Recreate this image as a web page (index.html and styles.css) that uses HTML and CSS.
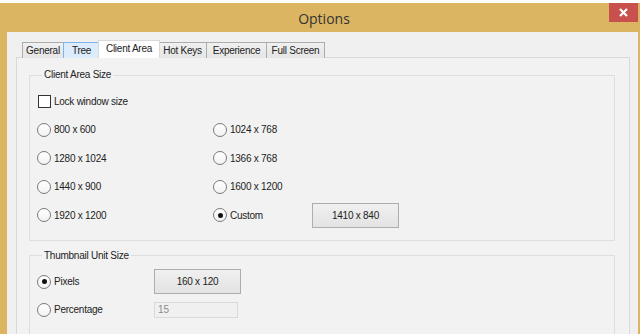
FILE: index.html
```html
<!DOCTYPE html>
<html lang="en">
<head>
  <meta charset="UTF-8" />
  <title>Options</title>
  <link rel="stylesheet" href="styles.css">
</head>
<body>
  <div class="window">
    <div class="titlebar">
      <span></span>
      <span class="title">Options</span>
      <div class="close-cell">
        <div class="close" title="Close">
          <svg width="9" height="9" viewBox="0 0 9 9"><path d="M1 1 L8 8 M8 1 L1 8" stroke="#ffffff" stroke-width="2.2"/></svg>
        </div>
      </div>
    </div>

    <div class="client">
      <div class="tabs">
        <span class="tab">General</span>
        <span class="tab hover">Tree</span>
        <span class="tab active">Client Area</span>
        <span class="tab">Hot Keys</span>
        <span class="tab">Experience</span>
        <span class="tab">Full Screen</span>
      </div>

      <div class="panel">
        <fieldset class="group">
          <legend>Client Area Size</legend>
          <div class="grid sizes">
            <label class="opt full"><input type="checkbox" /> Lock window size</label>

            <label class="opt"><input type="radio" name="size" /> 800 x 600</label>
            <label class="opt"><input type="radio" name="size" /> 1024 x 768</label>
            <span></span>

            <label class="opt"><input type="radio" name="size" /> 1280 x 1024</label>
            <label class="opt"><input type="radio" name="size" /> 1366 x 768</label>
            <span></span>

            <label class="opt"><input type="radio" name="size" /> 1440 x 900</label>
            <label class="opt"><input type="radio" name="size" /> 1600 x 1200</label>
            <span></span>

            <label class="opt"><input type="radio" name="size" /> 1920 x 1200</label>
            <label class="opt"><input type="radio" name="size" checked /> Custom</label>
            <button class="btn" type="button">1410 x 840</button>
          </div>
        </fieldset>

        <fieldset class="group">
          <legend>Thumbnail Unit Size</legend>
          <div class="grid thumbs">
            <label class="opt"><input type="radio" name="unit" checked /> Pixels</label>
            <button class="btn" type="button">160 x 120</button>

            <label class="opt"><input type="radio" name="unit" /> Percentage</label>
            <input class="field" type="text" value="15" disabled />
          </div>
        </fieldset>
      </div>
    </div>
  </div>
</body>
</html>
```

FILE: styles.css
```css
html, body {
  margin: 0;
  height: 100%;
  overflow: hidden;
  background: #fff;
}
body {
  font-family: "Liberation Sans", Arial, sans-serif;
  font-size: 10px;
  letter-spacing: -0.25px;
  color: #222;
}
.window {
  margin-top: 3px;
  padding: 0 2px 0 7px;
  background: #dcb562;
}
.titlebar {
  height: 29px;
  display: grid;
  grid-template-columns: 1fr auto 1fr;
}
.title {
  align-self: center;
  font-family: "Open Sans", sans-serif;
  font-size: 14px;
  letter-spacing: 0;
  color: #333;
  margin-left: 3px;
  margin-top: 1px;
}
.close-cell {
  display: flex;
  justify-content: flex-end;
  align-items: flex-start;
}
.close {
  width: 29px;
  height: 19px;
  background: rgb(201, 81, 77);
  display: flex;
  align-items: center;
  justify-content: center;
}
.client {
  background: #f0f0f0;
  padding: 8px 8px 0 9px;
  height: 400px;
}
.tabs {
  display: flex;
  align-items: flex-end;
  padding-left: 6px;
  height: 18px;
  position: relative;
  z-index: 1;
}
.tab {
  box-sizing: border-box;
  height: 16px;
  line-height: 15px;
  text-align: center;
  border: 1px solid #acacac;
  border-bottom: none;
  margin-right: -1px;
  background: linear-gradient(#f0f0f0, #e5e5e5);
  color: #222;
}
.tab:nth-child(1) { width: 42px; }
.tab:nth-child(2) { width: 37px; }
.tab:nth-child(3) { width: 62px; }
.tab:nth-child(4) { width: 49px; }
.tab:nth-child(5) { width: 61px; }
.tab:nth-child(6) { width: 59px; }
.tab.hover {
  background: #dcecfc;
  border-color: #7eb4ea;
  position: relative;
}
.tab.active {
  height: 18px;
  line-height: 16px;
  margin: 0 -2px 0 -1px;
  background: #fff;
  border-color: #d9d9d9;
  position: relative;
  z-index: 2;
}
.panel {
  border: 1px solid #d9d9d9;
  margin-top: -1px;
  background: #f2f2f2;
  padding: 10px 14px 0 12px;
  height: 400px;
}
.group {
  margin: 0 0 8px 0;
  padding: 0 0 10px 7px;
  border: 1px solid #dedede;
}
.group legend {
  margin-left: 5px;
  padding: 0 2px;
  line-height: 14px;
  color: #222;
}
.grid {
  display: grid;
  align-items: center;
}
.sizes {
  grid-template-columns: 176px 99px 87px;
  grid-auto-rows: 28.5px;
  padding-top: 5px;
}
.sizes .full {
  grid-column: 1 / -1;
}
.thumbs {
  grid-template-columns: 117px 87px;
  grid-template-rows: 28px 28px;
  padding-top: 5px;
  padding-bottom: 20px;
}
.opt {
  display: flex;
  align-items: center;
  gap: 3px;
}
.opt input {
  appearance: none;
  margin: 0;
  width: 14px;
  height: 14px;
  border: 1px solid #7a7a7a;
  background: #fff;
  position: relative;
}
.opt input[type="checkbox"] {
  width: 13px;
  height: 13px;
  border-color: #333;
  margin-left: 1px;
}
.opt input[type="radio"] {
  border-radius: 50%;
  background: linear-gradient(#fff, #f2f2f2);
}
.opt input[type="radio"]:checked::after {
  content: "";
  position: absolute;
  left: 3.5px;
  top: 3.5px;
  width: 5px;
  height: 5px;
  border-radius: 50%;
  background: #111;
}
.btn {
  width: 87px;
  height: 25px;
  padding: 0;
  border: 1px solid #adadad;
  background: linear-gradient(#f0f0f0, #e3e3e3);
  font-family: inherit;
  font-size: 10px;
  letter-spacing: -0.25px;
  color: #222;
}
.field {
  width: 84px;
  height: 16px;
  box-sizing: border-box;
  border: 1px solid #dadada;
  background: #f0f0f0;
  padding: 0 3px;
  font-family: inherit;
  font-size: 10px;
  color: #8a8a8a;
}
```
